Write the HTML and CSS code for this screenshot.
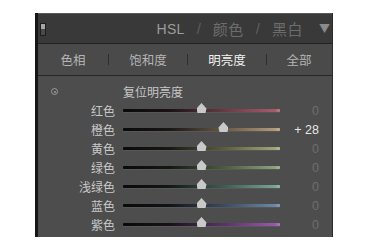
FILE: index.html
```html
<!DOCTYPE html>
<html>
<head>
<meta charset="utf-8">
<link rel="stylesheet" href="styles.css">
</head>
<body>
<div class="panel">
  <div class="header">
    <span class="toggle"></span>
    <div class="title">
      <span class="hsl">HSL</span>
      <span class="slash">/</span>
      <span class="dim">颜色</span>
      <span class="slash">/</span>
      <span class="dim">黑白</span>
      <span class="arrow">▼</span>
    </div>
  </div>
  <div class="tabs">
    <span class="tab">色相</span>
    <span class="sep"></span>
    <span class="tab">饱和度</span>
    <span class="sep"></span>
    <span class="tab active">明亮度</span>
    <span class="sep"></span>
    <span class="tab">全部</span>
  </div>
  <div class="content">
    <div class="reset">
      <span class="target"></span>
      <span class="reset-label">复位明亮度</span>
    </div>
    <div class="row"><span class="label">红色</span><div class="track red"><span class="thumb" style="--v:0"></span></div><span class="val">0</span></div>
    <div class="row"><span class="label">橙色</span><div class="track orange"><span class="thumb" style="--v:28"></span></div><span class="val on">+ 28</span></div>
    <div class="row"><span class="label">黄色</span><div class="track yellow"><span class="thumb" style="--v:0"></span></div><span class="val">0</span></div>
    <div class="row"><span class="label">绿色</span><div class="track green"><span class="thumb" style="--v:0"></span></div><span class="val">0</span></div>
    <div class="row"><span class="label">浅绿色</span><div class="track aqua"><span class="thumb" style="--v:0"></span></div><span class="val">0</span></div>
    <div class="row"><span class="label">蓝色</span><div class="track blue"><span class="thumb" style="--v:0"></span></div><span class="val">0</span></div>
    <div class="row"><span class="label">紫色</span><div class="track purple"><span class="thumb" style="--v:0"></span></div><span class="val">0</span></div>
  </div>
</div>
</body>
</html>
```
FILE: styles.css
```css
html, body { margin: 0; padding: 0; background: #ffffff; }
body { font-family: "Noto Sans CJK SC", "Noto Sans", sans-serif; }

.panel {
  margin: 13px 0 0 35px;
  width: 298px;
  height: 224px;
  box-sizing: border-box;
  border-left: 3px solid #161616;
  border-right: 1px solid #2a2a2a;
  background: #4e4e4e;
  display: flex;
  flex-direction: column;
}

.header {
  height: 31px;
  box-sizing: border-box;
  background: #393939;
  border-top: 1px solid #5a5a5a;
  border-bottom: 1px solid #222;
  display: flex;
  align-items: center;
  padding: 0 2px 0 2px;
}
.toggle {
  width: 6px;
  height: 13px;
  box-sizing: border-box;
  border: 1px solid #1e1e1e;
  background: linear-gradient(#a6a6a6 0 45%, #4a4a4a 45% 100%);
  margin-top: 2px;
}
.title {
  margin-left: auto;
  display: flex;
  align-items: center;
  gap: 12px;
  font-size: 15px;
  color: #6e6e6e;
  line-height: 1;
}
.hsl { font-family: "Liberation Sans", sans-serif; font-size: 14px; color: #9c9c9c; letter-spacing: 0.3px; }
.slash { font-family: "Liberation Sans", sans-serif; color: #5e5e5e; font-size: 15px; }
.dim { color: #6c6c6c; letter-spacing: 0.5px; }
.arrow { font-size: 11px; color: #8a8a8a; margin-left: 4px; }

.tabs {
  height: 32px;
  box-sizing: border-box;
  background: #4a4a4a;
  border-bottom: 1px solid #262626;
  display: flex;
  align-items: center;
  font-size: 12.5px;
  color: #b4b4b4;
}
.tab { flex: none; text-align: center; }
.tab:nth-child(1) { width: 70px; }
.tab:nth-child(3) { width: 78px; }
.tab:nth-child(5) { width: 78px; }
.tab:nth-child(7) { width: 64px; }
.tab.active { color: #f2f2f2; }
.sep { width: 1px; height: 11px; background: #2e2e2e; flex: none; }

.content {
  flex: 1;
  padding-top: 6px;
  background: #4d4d4d;
}
.reset {
  height: 19px;
  display: flex;
  align-items: center;
  font-size: 12px;
}
.target {
  width: 5px;
  height: 5px;
  border: 1px solid #9a9a9a;
  border-radius: 50%;
  margin-left: 13px;
  position: relative;
  flex: none;
}
.target::after {
  content: "";
  position: absolute;
  left: 1.5px; top: 1.5px;
  width: 2px; height: 2px;
  background: #9a9a9a;
  border-radius: 50%;
}
.reset-label { margin-left: 65px; color: #c6c6c6; }

.row {
  height: 19px;
  display: grid;
  grid-template-columns: 77px 165px 39px;
  align-items: center;
  font-size: 12px;
}
.label { text-align: right; color: #c8c8c8; }
.track {
  margin-left: 8px;
  height: 3px;
  position: relative;
  border-radius: 1px;
  box-shadow: 0 1px 0 rgba(255,255,255,0.06);
}
.val { text-align: right; color: #6e6e6e; font-family: "Liberation Sans", sans-serif; font-size: 12.5px; }
.val.on { color: #e6e6e6; }

.red    { background: linear-gradient(90deg, #0a0a0a 0%, #1a1214 30%, #6a3a44 65%, #a85a6a 97%, #c08090 100%); }
.orange { background: linear-gradient(90deg, #0a0a0a 0%, #1a1614 30%, #6a5a44 65%, #b09a7a 97%, #c8b498 100%); }
.yellow { background: linear-gradient(90deg, #0a0a0a 0%, #181812 30%, #5e5e3e 65%, #a4a47a 97%, #bcbc96 100%); }
.green  { background: linear-gradient(90deg, #0a0a0a 0%, #141812 30%, #4a5e3e 65%, #8aa47a 97%, #a4bc96 100%); }
.aqua   { background: linear-gradient(90deg, #0a0a0a 0%, #121816 30%, #3e5e52 65%, #7aa498 97%, #98bcb2 100%); }
.blue   { background: linear-gradient(90deg, #0a0a0a 0%, #121418 30%, #3a4c62 65%, #6a88a8 97%, #8aa4c0 100%); }
.purple { background: linear-gradient(90deg, #0a0a0a 0%, #181218 30%, #5a3468 65%, #9a58ac 97%, #b27cc2 100%); }

.thumb {
  position: absolute;
  top: -6px;
  left: calc(50% + var(--v) * 0.785px - 5px);
  width: 10px;
  height: 10px;
  background: #c9c9c9;
  clip-path: polygon(50% 0, 100% 55%, 90% 100%, 10% 100%, 0 55%);
}
```
